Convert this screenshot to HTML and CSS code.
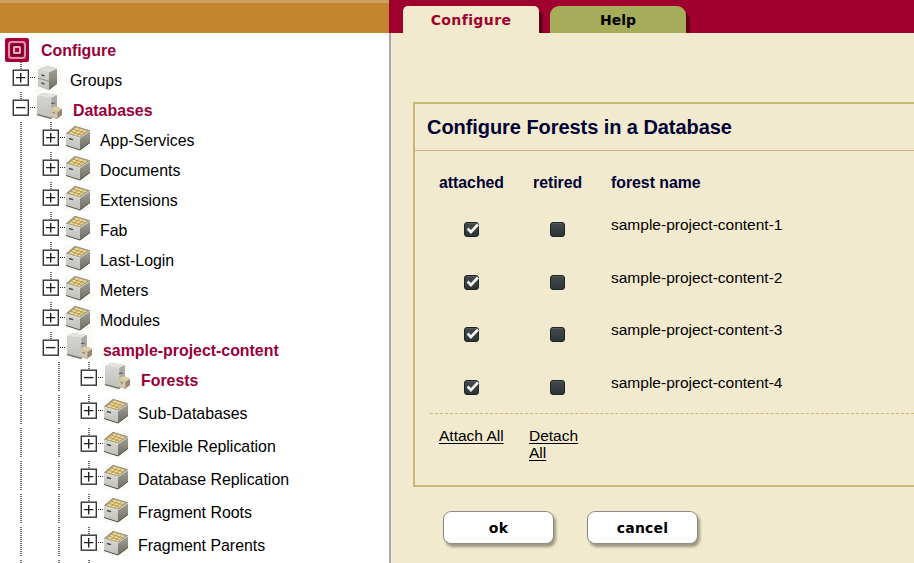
FILE: index.html
```html
<!DOCTYPE html>
<html lang="en">
<head>
<meta charset="utf-8">
<title>Configure Forests in a Database</title>
<link rel="stylesheet" href="styles.css">
</head>
<body>
<svg width="0" height="0" class="defs" aria-hidden="true">
  <defs>
    <linearGradient id="face" x1="0" y1="0" x2="0" y2="1"><stop offset="0" stop-color="#d6d7d4"/><stop offset="1" stop-color="#bfc0bb"/></linearGradient>
    <linearGradient id="side" x1="0" y1="0" x2="0" y2="1"><stop offset="0" stop-color="#a3a298"/><stop offset="1" stop-color="#6f6c61"/></linearGradient>
    <linearGradient id="dark" x1="0" y1="0" x2="0" y2="1"><stop offset="0" stop-color="#444b4e"/><stop offset="1" stop-color="#2b3436"/></linearGradient>
    <symbol id="root" viewBox="0 0 24 24">
      <rect width="24" height="24" rx="2" fill="#a5003c"/>
      <rect x="4" y="4" width="16" height="16" rx="2.500" fill="#a5003c" stroke="#dc94ab" stroke-width="2"/>
      <rect x="6" y="6" width="12" height="12" rx="2" fill="#74052c"/>
      <rect x="9" y="9" width="6" height="6" rx=".5" fill="#b5003f" stroke="#e7adbf" stroke-width="2"/>
    </symbol>
    <symbol id="plus" viewBox="0 0 17 17">
      <rect x="1.300" y="1.200" width="15" height="15" fill="#fff" stroke="#333" stroke-width="1.400"/>
      <path d="M4 8.600h9.400M8.700 4v9.400" stroke="#222" stroke-width="1.400"/>
    </symbol>
    <symbol id="minus" viewBox="0 0 17 17">
      <rect x="1.300" y="1.200" width="15" height="15" fill="#fff" stroke="#333" stroke-width="1.400"/>
      <path d="M4 8.600h9.400" stroke="#222" stroke-width="1.400"/>
    </symbol>
    <symbol id="cabinet" viewBox="0 0 26 26">
      <rect width="26" height="26" fill="#fafaf7"/>
      <path d="M3 4.500 12 1l10 3v15l-8 6-11-4z" fill="#8b8b84"/>
      <path d="M3 4.500 12 1l10 3-8 4z" fill="#dcdddb"/>
      <path d="M3 4.500l11 3V25L3 21z" fill="url(#face)"/>
      <path d="M14 7.500l8-3.500v15l-8 6z" fill="url(#side)"/>
      <path d="M3 13l11 3.200" stroke="#8d8d86"/>
      <path d="M6.500 10l3 .8M6.500 18l3 .8" stroke="#444" stroke-width="1.300"/>
    </symbol>
    <symbol id="server" viewBox="0 0 28 28">
      <rect width="28" height="28" fill="#fafaf7"/>
      <path d="M2.500 4 8 1l14 2v19l-6 4.500L2 22z" fill="#b5b6b1"/>
      <path d="M2.500 4 8 1l14 2-5.500 3z" fill="#e3e4e2"/>
      <path d="M2.500 4l14 2v20.500L2 22.500z" fill="url(#face)"/>
      <path d="M16.500 6l5.500-3v19l-5.500 4.500z" fill="#a9aaa4"/>
      <path d="M2 22.500l14.500 4" stroke="#77776f" stroke-width="1.400"/>
      <path d="M16 11.500l4-.5" stroke="#555" stroke-width="1.200"/>
      <path d="M15 17l5-3 7 3v6l-5 4-7-3z" fill="#948970"/>
      <path d="M15 17l5-3 7 3-4.500 3z" fill="#dccfa2"/>
      <path d="M15 17l7.500 3v7L15 24z" fill="#cec6b0"/>
      <path d="M17.500 20.500l2.500.8" stroke="#746a52"/>
    </symbol>
    <symbol id="drawer" viewBox="0 0 26 26">
      <rect width="26" height="26" fill="#fafaf7"/>
      <path d="M1 8.500 10 1l15 4.500v12L15 25 1 20.500z" fill="#777469"/>
      <path d="M1 8.500 10 1l15 4.500-10 7.500z" fill="#a59b80"/>
      <path d="M4 8.300l7-5.800 11 3.500-7.500 5.500z" fill="#efd98f"/>
      <path d="M6 6.300l10.500 3.700M8.500 4.300l11 3.500M8 9.500l6.500-5.500M12 10.500l6.500-5" stroke="#a48e50" stroke-width=".8"/>
      <path d="M1 9l14 4v12L1 20.500z" fill="url(#face)"/>
      <path d="M15 13l10-7v11.500L15 25z" fill="url(#side)"/>
      <path d="M1 20.500L15 25l10-7.500" fill="none" stroke="#56534a"/>
      <path d="M1 9l14 4 10-7" fill="none" stroke="#ededea" stroke-width=".8"/>
      <path d="M4 13.500l4 1.200" stroke="#444" stroke-width="1.400"/>
    </symbol>
    <symbol id="box-off" viewBox="0 0 15 15">
      <rect x=".5" y=".5" width="14" height="14" rx="2.500" fill="url(#dark)" stroke="#1d2224"/>
      <path d="M2.500 1.500h10" stroke="#555c5f"/>
    </symbol>
    <symbol id="box-on" viewBox="0 0 15 15">
      <use href="#box-off"/>
      <path d="M3.600 6.500l3.300 3.500L14 2.500" fill="none" stroke="#f3f3f3" stroke-width="2.600"/>
    </symbol>
  </defs>
</svg>
<div class="app">
  <aside class="sidebar">
    <div class="brand"></div>
    <nav class="tree">
      <div class="root"><svg class="root-icon"><use href="#root"/></svg><b>Configure</b></div>
      <div class="node l0"><svg class="toggle"><use href="#plus"/></svg><i></i><svg class="icon"><use href="#cabinet"/></svg><span>Groups</span></div>
      <div class="node l0"><svg class="toggle"><use href="#minus"/></svg><i></i><svg class="icon big"><use href="#server"/></svg><b>Databases</b></div>
      <div class="node l1"><svg class="toggle"><use href="#plus"/></svg><i></i><svg class="icon"><use href="#drawer"/></svg><span>App-Services</span></div>
      <div class="node l1"><svg class="toggle"><use href="#plus"/></svg><i></i><svg class="icon"><use href="#drawer"/></svg><span>Documents</span></div>
      <div class="node l1"><svg class="toggle"><use href="#plus"/></svg><i></i><svg class="icon"><use href="#drawer"/></svg><span>Extensions</span></div>
      <div class="node l1"><svg class="toggle"><use href="#plus"/></svg><i></i><svg class="icon"><use href="#drawer"/></svg><span>Fab</span></div>
      <div class="node l1"><svg class="toggle"><use href="#plus"/></svg><i></i><svg class="icon"><use href="#drawer"/></svg><span>Last-Login</span></div>
      <div class="node l1"><svg class="toggle"><use href="#plus"/></svg><i></i><svg class="icon"><use href="#drawer"/></svg><span>Meters</span></div>
      <div class="node l1"><svg class="toggle"><use href="#plus"/></svg><i></i><svg class="icon"><use href="#drawer"/></svg><span>Modules</span></div>
      <div class="node l1"><svg class="toggle"><use href="#minus"/></svg><i></i><svg class="icon big"><use href="#server"/></svg><b>sample-project-content</b></div>
      <div class="node l2"><svg class="toggle"><use href="#minus"/></svg><i></i><svg class="icon big"><use href="#server"/></svg><b>Forests</b></div>
      <div class="node l2"><svg class="toggle"><use href="#plus"/></svg><i></i><svg class="icon"><use href="#drawer"/></svg><span>Sub-Databases</span></div>
      <div class="node l2"><svg class="toggle"><use href="#plus"/></svg><i></i><svg class="icon"><use href="#drawer"/></svg><span>Flexible Replication</span></div>
      <div class="node l2"><svg class="toggle"><use href="#plus"/></svg><i></i><svg class="icon"><use href="#drawer"/></svg><span>Database Replication</span></div>
      <div class="node l2"><svg class="toggle"><use href="#plus"/></svg><i></i><svg class="icon"><use href="#drawer"/></svg><span>Fragment Roots</span></div>
      <div class="node l2"><svg class="toggle"><use href="#plus"/></svg><i></i><svg class="icon"><use href="#drawer"/></svg><span>Fragment Parents</span></div>
      <div class="node l2"></div>
    </nav>
  </aside>
  <main class="main">
    <div class="tabs"><div class="tab active">Configure</div><div class="tab">Help</div></div>
    <section class="panel">
      <h1>Configure Forests in a Database</h1>
      <div class="grid head"><b>attached</b><b>retired</b><b>forest name</b></div>
      <div class="rows">
        <div class="grid row"><svg class="check"><use href="#box-on"/></svg><svg class="check"><use href="#box-off"/></svg><span>sample-project-content-1</span></div>
        <div class="grid row"><svg class="check"><use href="#box-on"/></svg><svg class="check"><use href="#box-off"/></svg><span>sample-project-content-2</span></div>
        <div class="grid row"><svg class="check"><use href="#box-on"/></svg><svg class="check"><use href="#box-off"/></svg><span>sample-project-content-3</span></div>
        <div class="grid row"><svg class="check"><use href="#box-on"/></svg><svg class="check"><use href="#box-off"/></svg><span>sample-project-content-4</span></div>
      </div>
      <div class="links"><a>Attach All</a><a>Detach All</a></div>
    </section>
    <div class="buttons"><button>ok</button><button>cancel</button></div>
  </main>
</div>
</body>
</html>
```
FILE: styles.css
```css
* { box-sizing: border-box; }
body { margin: 0; font: 15.5px/18px "Liberation Sans", Arial, sans-serif; color: #000; background: #fff; }
.defs { position: absolute; }
svg { display: block; flex: none; }
.app { display: flex; width: 914px; height: 563px; overflow: hidden; }
.sidebar { width: 389px; flex: none; }
.brand { height: 33px; background: #c1862e; border-top: 3px solid #cda05c; }
.tree { font-size: 15.900px; }
.root { display: flex; height: 29px; padding: 5px 0 0 5px; gap: 12px; }
.root-icon { width: 24px; height: 24px; }
.root b { padding-top: 4px; }
.tree b { color: #99003a; }
.node {
  --dots: repeating-linear-gradient(#6a6a6a 0 1px, transparent 1px 2px);
  display: flex; height: 30px; background-repeat: no-repeat;
}
.l0 { padding-left: 12px; background-image: var(--dots); background-size: 2px 8px; background-position: 20px 0; }
.l1 { padding-left: 42px; background-image: var(--dots), var(--dots); background-size: 2px 30px, 2px 8px; background-position: 20px 0, 50px 0; }
.l2 { height: 33px; padding-left: 80px; background-image: var(--dots), var(--dots), var(--dots); background-size: 2px 29px, 2px 29px, 2px 8px; background-position: 20px 0, 58px 0, 88px 0; }
.toggle { width: 17px; height: 17px; margin-top: 7px; }
.node i { width: 6px; height: 1px; margin-top: 15px; background: repeating-linear-gradient(90deg, transparent 0 1px, #222 1px 2px); }
.icon { width: 26px; height: 26px; margin: 3px 9px 0 0; }
.icon.big { width: 28px; height: 28px; margin: 0 10px 0 0; }
.node span, .node b { padding-top: 10px; white-space: nowrap; }
.main { flex: 1; min-width: 0; background: #f2eacf; border-left: 2px solid #a7a7a7; }
.tabs { display: flex; gap: 11px; height: 33px; margin-left: -2px; padding: 6px 0 0 14px; background: #a0002d; overflow: hidden; }
.tab { width: 136px; height: 27px; border-radius: 9px 9px 0 0; background: #a5ad5b; box-shadow: 4px 5px 0 #66001d; font: bold 14px/29px "DejaVu Sans", sans-serif; text-align: center; color: #000; }
.tab.active { background: #f2eacf; color: #a0002d; border-radius: 5px 5px 0 0; letter-spacing: .4px; }
.panel { height: 385px; margin: 69px 0 0 22px; border: 2px solid #c8b878; border-right: 0; }
h1 { height: 47px; margin: 0; padding-left: 12px; border-bottom: 1px solid #c8b878; font-size: 20px; line-height: 47px; letter-spacing: -.06px; color: #000033; }
.grid { display: grid; }
.head { grid-template-columns: 94px 78px 1fr; margin-left: 24px; padding-top: 23px; color: #000033; font-size: 15.800px; }
.rows { height: 222px; margin-left: 15px; padding-top: 24px; border-bottom: 1px dashed #c8b878; }
.row { grid-template-columns: 86px 61px 1fr; height: 52.700px; margin-left: 34px; }
.check { width: 15px; height: 15px; margin-top: 6px; }
.links { display: flex; gap: 20px; margin: 13px 0 0 24px; line-height: 17px; }
.links a { width: 70px; text-decoration: underline; text-underline-offset: 2px; }
.links a:last-child { width: 60px; }
.buttons { display: flex; gap: 33px; margin: 24px 0 0 52px; }
button { width: 111px; height: 33px; border: 1px solid #8f8d82; border-radius: 8px; background: #fff; box-shadow: 2px 3px 3px #9c9682; font: bold 14px "DejaVu Sans", sans-serif; letter-spacing: .2px; padding: 0; color: #000; }
```
